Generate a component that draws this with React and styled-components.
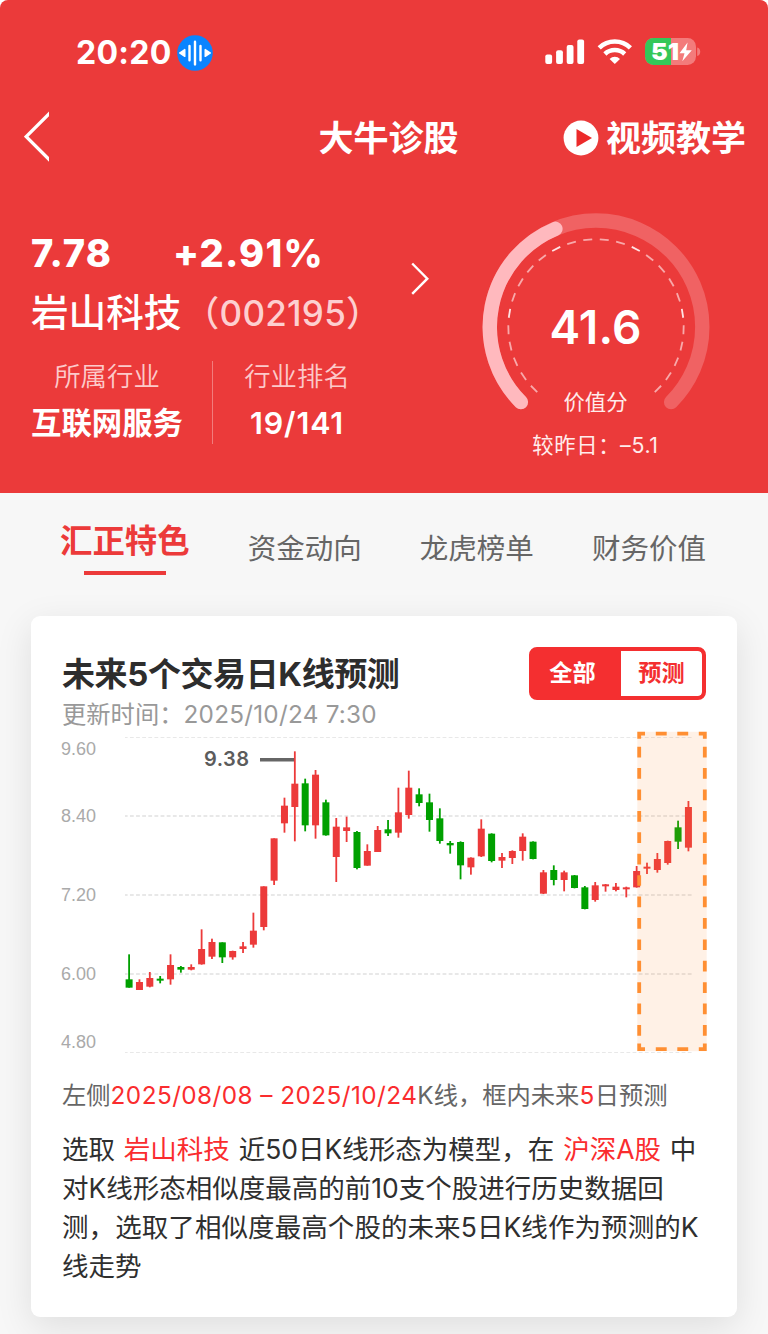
import React from 'react';
import styled, { createGlobalStyle } from 'styled-components';

const GlobalStyle = createGlobalStyle`
    * {
        box-sizing: border-box;
    }

    body {
        margin: 0;
        background: #fff;
        font-family: Inter, 'Noto Sans CJK SC', sans-serif;
        -webkit-font-smoothing: antialiased;
    }
`;

const Page = styled.div`
    width: 768px;
    height: 1334px;
    overflow: hidden;
    border-radius: 8px 8px 0 0;
    background: #f7f7f7;
    white-space: nowrap;
`;

const Header = styled.header`
    height: 493px;
    background: #eb3a3a;
    color: #fff;
`;

const StatusBar = styled.div`
    display: flex;
    align-items: center;
    justify-content: space-between;
    height: 105px;
    padding: 0 67px 0 76px;
`;

const StatusGroup = styled.div`
    display: flex;
    align-items: center;
    gap: ${(p) => p.$gap}px;
    margin-bottom: ${(p) => p.$lift || 0}px;
`;

const Clock = styled.span`
    width: 96px;
    font-size: 32px;
    line-height: 40px;
    font-weight: 700;
    letter-spacing: 0.3px;
`;

const Nav = styled.nav`
    display: grid;
    grid-template-columns: 1fr auto 1fr;
    align-items: center;
    height: 65px;
    padding: 0 22px 0 24px;
`;

const BackArrow = styled.svg`
    margin-bottom: 2px;
`;

const NavTitle = styled.h1`
    margin: 0;
    padding-left: 7px;
    font-size: 35px;
    line-height: 50px;
    font-weight: 700;
`;

const VideoLink = styled.div`
    display: flex;
    align-items: center;
    justify-content: flex-end;
    gap: 6.5px;
    font-size: 35px;
    line-height: 50px;
    font-weight: 700;
`;

const Summary = styled.div`
    display: flex;
    height: 323px;
    padding: 0 0 0 31px;
`;

const Stock = styled.div`
    width: 380px;
    padding-top: 58px;
`;

const PriceRow = styled.div`
    display: flex;
    height: 51px;
    font-size: 38px;
    line-height: 50px;
    font-weight: 850;
`;

const Price = styled.span`
    width: 142px;
    letter-spacing: 1px;
`;

const Change = styled.span`
    letter-spacing: 1.2px;
`;

const NameRow = styled.div`
    display: flex;
    height: 68px;
    font-size: 37.6px;
    line-height: 68px;
    font-weight: 500;
`;

const Code = styled.span`
    margin-left: 3px;
    font-size: 35px;
    letter-spacing: 0.25px;
    color: #fdcfd0;
`;

const Facts = styled.div`
    display: flex;
    align-items: flex-start;
    margin-top: 14px;
    height: 83px;
`;

const Fact = styled.div`
    display: flex;
    flex-direction: column;
    align-items: center;
    width: ${(p) => p.$width}px;
`;

const FactLabel = styled.span`
    font-size: 26.4px;
    line-height: 30px;
    font-weight: 350;
    color: #fccaca;
`;

const FactValue = styled.span`
    margin-top: 7px;
    font-size: 30.4px;
    line-height: 50px;
    font-weight: ${(p) => p.$weight || 700};
    letter-spacing: ${(p) => p.$ls || 0}px;
`;

const FactLine = styled.div`
    width: 1px;
    height: 83px;
    margin: 0 0 0 29px;
    background: #f27c7c;
`;

const MoreArrow = styled.div`
    width: 70px;
    padding-top: 92px;
`;

const Gauge = styled.div`
    display: grid;
    justify-items: center;
    width: 229px;
    padding-top: 43px;
`;

const GaugeRing = styled.svg`
    grid-area: 1 / 1;
    align-self: start;
    display: block;
`;

const GaugeText = styled.div`
    grid-area: 1 / 1;
    display: flex;
    flex-direction: column;
    align-items: center;
    padding-top: 84px;
`;

const Score = styled.span`
    font-size: 46px;
    line-height: 60px;
    font-weight: 600;
    letter-spacing: 0.2px;
`;

const ScoreNote = styled.span`
    margin-top: ${(p) => p.$top}px;
    font-size: 21.3px;
    line-height: 30px;
    font-weight: 400;
    color: #ffecec;
    letter-spacing: ${(p) => p.$ls || 0}px;
`;

const Tabs = styled.div`
    display: flex;
    height: 123px;
    padding: 24px 62px 0 60px;
    justify-content: space-between;
`;

const Tab = styled.div`
    display: flex;
    flex-direction: column;
    align-items: center;
    padding-top: ${(p) => (p.$active ? 0 : 12)}px;
    font-size: ${(p) => (p.$active ? 32.4 : 28.5)}px;
    line-height: ${(p) => (p.$active ? 50 : 40)}px;
    font-weight: ${(p) => (p.$active ? 700 : 400)};
    color: ${(p) => (p.$active ? '#ec3a3a' : '#666')};

    &::after {
        content: '';
        width: 82px;
        height: 4px;
        margin-top: 4px;
        background: ${(p) => (p.$active ? '#ec3a3a' : 'transparent')};
    }
`;

const Card = styled.section`
    width: 706px;
    height: 701px;
    margin-left: 31px;
    padding: 31px 31px 0;
    border-radius: 9px;
    background: #fff;
    box-shadow: 0 10px 36px rgba(0, 0, 0, 0.1);
`;

const CardHead = styled.div`
    display: flex;
    justify-content: space-between;
    height: 83px;
`;

const CardTitle = styled.h2`
    margin: 1px 0 0;
    font-size: 33px;
    line-height: 52px;
    font-weight: 700;
    letter-spacing: -0.4px;
    color: #2d2d2d;
`;

const Updated = styled.div`
    margin-top: -1px;
    font-size: 24.3px;
    line-height: 30px;
    color: #999;
`;

const Toggle = styled.div`
    display: flex;
    width: 177px;
    height: 53px;
    border: 4px solid #f42f30;
    border-radius: 8px;
    overflow: hidden;
    background: #f42f30;
`;

const ToggleItem = styled.div`
    width: ${(p) => (p.$active ? 88 : 81)}px;
    padding-right: ${(p) => (p.$active ? 9 : 0)}px;
    border-radius: ${(p) => (p.$active ? '0' : '0 4px 4px 0')};
    line-height: 44px;
    text-align: center;
    font-size: 23.2px;
    font-weight: 700;
    background: ${(p) => (p.$active ? '#f42f30' : '#fff')};
    color: ${(p) => (p.$active ? '#fff' : '#f42f30')};
`;

const Chart = styled.svg`
    display: block;
    overflow: visible;
`;

const Range = styled.p`
    margin: 20px 0 0;
    font-size: 24.3px;
    line-height: 40px;
    color: #666;
`;

const Desc = styled.div`
    margin-top: 14.5px;
    font-size: 26.5px;
    line-height: 39.3px;
    color: #2f2f2f;
`;

const DescLine = styled.div`
    word-spacing: ${(p) => p.$ws || 0}px;
    letter-spacing: ${(p) => p.$ls || 0}px;
`;

const Spaced = styled.span`
    letter-spacing: ${(p) => p.$ls || 0}px;
`;

const Red = styled(Spaced)`
    color: #fa2c2e;
`;

const RED = '#ec3a3a';
const GREEN = '#00a000';

// [color, high, low, bodyTop, bodyBottom], thirds of a pixel below the chart top
const candles = [
    [GREEN, 673, 773, 748, 773],
    [RED, 748, 780, 756, 780],
    [RED, 726, 772, 744, 770],
    [GREEN, 738, 760, 746, 752],
    [RED, 673, 764, 705, 748],
    [GREEN, 708, 728, 711, 719],
    [RED, 703, 721, 711, 719],
    [RED, 598, 704, 657, 703],
    [RED, 626, 687, 636, 680],
    [GREEN, 637, 699, 637, 682],
    [RED, 662, 689, 663, 682],
    [RED, 636, 669, 649, 657],
    [RED, 548, 653, 602, 644],
    [RED, 469, 601, 469, 591],
    [RED, 325, 465, 325, 452],
    [RED, 203, 308, 227, 280],
    [RED, 64, 334, 161, 231],
    [GREEN, 146, 304, 160, 286],
    [RED, 120, 326, 134, 286],
    [GREEN, 209, 317, 217, 316],
    [RED, 264, 456, 290, 381],
    [RED, 260, 336, 292, 303],
    [GREEN, 303, 418, 306, 414],
    [RED, 343, 407, 363, 407],
    [RED, 288, 366, 300, 366],
    [GREEN, 270, 318, 298, 310],
    [RED, 173, 323, 247, 308],
    [RED, 122, 266, 173, 255],
    [GREEN, 175, 229, 193, 219],
    [GREEN, 191, 305, 217, 270],
    [GREEN, 235, 341, 265, 333],
    [GREEN, 333, 371, 339, 346],
    [GREEN, 334, 448, 336, 406],
    [RED, 382, 434, 383, 412],
    [RED, 268, 381, 296, 379],
    [GREEN, 310, 397, 311, 393],
    [RED, 369, 414, 381, 392],
    [RED, 361, 402, 363, 384],
    [RED, 310, 392, 320, 363],
    [GREEN, 334, 388, 335, 387],
    [RED, 420, 492, 427, 491],
    [GREEN, 406, 466, 420, 450],
    [RED, 422, 484, 427, 450],
    [GREEN, 435, 475, 436, 474],
    [GREEN, 468, 538, 472, 537],
    [RED, 456, 515, 466, 510],
    [RED, 462, 485, 463, 469],
    [RED, 459, 484, 470, 480],
    [RED, 470, 502, 472, 478],
    [RED, 408, 473, 423, 472],
    [RED, 398, 432, 410, 416],
    [RED, 369, 428, 387, 420],
    [RED, 332, 404, 333, 399],
    [GREEN, 272, 357, 292, 335],
    [RED, 213, 364, 231, 353],
];

const gridLines = [
    { y: 7.5, label: '9.60', labelY: 25.3, width: 1 },
    { y: 86, label: '8.40', labelY: 92, width: 1.8 },
    { y: 165, label: '7.20', labelY: 171, width: 1.8 },
    { y: 244, label: '6.00', labelY: 250, width: 1.8 },
    { y: 322.5, label: '4.80', labelY: 318, width: 1 },
];

const KLineChart = () => (
    <Chart width="645" height="325" viewBox="0 0 645 325">
        {gridLines.map((line) => (
            <g key={line.label}>
                <line
                    x1="63"
                    x2="630"
                    y1={line.y}
                    y2={line.y}
                    stroke="#e8e8e8"
                    strokeWidth={line.width}
                    strokeDasharray="3.8 2.33"
                    strokeDashoffset="1.2"
                />
                <text x="-1" y={line.labelY} fontFamily="Liberation Sans" fontSize="18" fill="#aaa">
                    {line.label}
                </text>
            </g>
        ))}
        <line x1="198" x2="233" y1="29.8" y2="29.8" stroke="#666" strokeWidth="3.4" />
        <text x="142" y="35.6" fontSize="20" fontWeight="600" fill="#5c5c5c" textLength="45">
            9.38
        </text>
        {candles.map(([color, high, low, top, bottom], i) => {
            const x = 67.1 + i * 10.358;
            return (
                <g key={i} fill={color}>
                    <rect x={x - 0.9} y={high / 3} width="1.8" height={(low - high) / 3} />
                    <rect x={x - 3.5} y={top / 3} width="7" height={(bottom - top) / 3} />
                </g>
            );
        })}
        <rect x="575.3" y="1.8" width="69.4" height="319.4" fill="#ff8f33" fillOpacity="0.12" />
        <g fill="none" stroke="#ff8f33" strokeWidth="3.8">
            <path d="M577.2 16.7V306M642.8 16.7V306" strokeDasharray="10.7 10.71" />
            <path d="M593.8 3.7h10.9M615.3 3.7h10.9M593.8 319.1h10.9M615.3 319.1h10.9" />
            <path d="M583 3.7h-5.8v5M636.8 3.7h6v5M583 319.1h-5.8v-5.5M636.8 319.1h6v-5.5" />
        </g>
    </Chart>
);

const dashes = Array.from({ length: 26 }, (_, i) => i);

const ScoreGauge = () => (
    <Gauge>
        <GaugeRing width="228" height="228" viewBox="-114 -114 228 228">
            <g fill="none" strokeWidth="14.4" strokeLinecap="round">
                <path d="M-75.1 75.1A106.3 106.3 0 1 1 75.1 75.1" stroke="#f06263" />
                <path d="M-75.1 75.1A106.3 106.3 0 0 1 -40.6 -98.2" stroke="#ffb9be" />
            </g>
            {dashes.map((i) => (
                <line
                    key={i}
                    x1="-4.5"
                    x2="4.5"
                    y1="-87.6"
                    y2="-87.6"
                    stroke={i % 5 === 0 && i > 0 && i < 25 ? '#ffe3e4' : '#f8a9aa'}
                    strokeWidth="1.8"
                    transform={`rotate(${i * 10.8 - 135})`}
                />
            ))}
        </GaugeRing>
        <GaugeText>
            <Score>41.6</Score>
            <ScoreNote $top={30}>价值分</ScoreNote>
            <ScoreNote $top={13} $ls={0.65}>
                较昨日：–5.1
            </ScoreNote>
        </GaugeText>
    </Gauge>
);

const VoiceIcon = () => (
    <svg width="36" height="36" viewBox="0 0 36 36">
        <circle cx="18" cy="18" r="17.8" fill="#0a84ff" />
        <path d="M18 6.8v22.6M12.5 11v14.2M23.5 11v14.2" stroke="#fff" strokeWidth="2.4" strokeLinecap="round" />
        <path d="M2.6 18l5.2-3.4v6.8zM33.4 18l-5.2-3.4v6.8z" fill="#fff" stroke="#fff" strokeWidth="1.4" strokeLinejoin="round" />
    </svg>
);

const SignalIcon = () => (
    <svg width="40" height="26" viewBox="0 0 40 26" fill="#fff">
        <rect x="0.3" y="15.4" width="6.8" height="9.6" rx="2" />
        <rect x="11.1" y="11.2" width="6.8" height="13.8" rx="2" />
        <rect x="21.7" y="6" width="6.8" height="19" rx="2" />
        <rect x="32.3" y="0.5" width="6.8" height="24.5" rx="2" />
    </svg>
);

const WifiIcon = () => (
    <svg width="36" height="26" viewBox="0 0 36 26">
        <path d="M2.2 8.800a22.6 22.6 0 0 1 31.2 0M7.900 15a14.400 14.400 0 0 1 19.800 0" fill="none" stroke="#fff" strokeWidth="4.6" />
        <path d="M12.6 19.9a7.4 7.4 0 0 1 10.4 0L17.8 25z" fill="#fff" />
    </svg>
);

const BatteryIcon = () => (
    <svg width="56" height="28" viewBox="0 0 56 28">
        <defs>
            <clipPath id="battery">
                <rect width="51" height="27" rx="8.4" />
            </clipPath>
        </defs>
        <g clipPath="url(#battery)">
            <rect width="51" height="27" fill="#f37b7b" />
            <rect width="26" height="27" fill="#34c759" />
        </g>
        <path d="M52.2 9.5c2 .5 3 2 3 4.2s-1 3.7-3 4.2z" fill="#f37b7b" />
        <text x="6" y="22" fontSize="23.500" fontWeight="900" fill="#fff" textLength="28" lengthAdjust="spacingAndGlyphs">
            51
        </text>
        <path d="M42.6 4.500L34.500 15.200h5L37.300 23.200l9.500-11h-5.600z" fill="#fff" />
    </svg>
);

const App = () => (
    <>
        <GlobalStyle />
        <Page>
            <Header>
                <StatusBar>
                    <StatusGroup $gap={5}>
                        <Clock>20:20</Clock>
                        <VoiceIcon />
                    </StatusGroup>
                    <StatusGroup $gap={12} $lift={1}>
                        <SignalIcon />
                        <WifiIcon />
                        <BatteryIcon />
                    </StatusGroup>
                </StatusBar>
                <Nav>
                    <BackArrow width="25" height="52" viewBox="0 0 25 52">
                        <path d="M27 0.800L2.200 25.600L27 50.400" fill="none" stroke="#fff" strokeWidth="3.400" />
                    </BackArrow>
                    <NavTitle>大牛诊股</NavTitle>
                    <VideoLink>
                        <svg width="36" height="36" viewBox="0 0 36 36">
                            <circle cx="18" cy="18" r="17.400" fill="#fff" />
                            <path d="M13.500 9v18L29 18z" fill="#ec2a2a" />
                        </svg>
                        视频教学
                    </VideoLink>
                </Nav>
                <Summary>
                    <Stock>
                        <PriceRow>
                            <Price>7.78</Price>
                            <Change>+2.91%</Change>
                        </PriceRow>
                        <NameRow>
                            岩山科技<Code>（002195）</Code>
                        </NameRow>
                        <Facts>
                            <Fact $width={152}>
                                <FactLabel>所属行业</FactLabel>
                                <FactValue>互联网服务</FactValue>
                            </Fact>
                            <FactLine />
                            <Fact $width={168}>
                                <FactLabel>行业排名</FactLabel>
                                <FactValue $weight={600} $ls={0.9}>
                                    19/141
                                </FactValue>
                            </Fact>
                        </Facts>
                    </Stock>
                    <MoreArrow>
                        <svg width="18" height="34" viewBox="0 0 18 34">
                            <path d="M1.200 1.500L16.300 16.700L1.200 31.800" fill="none" stroke="#fff" strokeWidth="2.400" />
                        </svg>
                    </MoreArrow>
                    <ScoreGauge />
                </Summary>
            </Header>
            <Tabs>
                <Tab $active>汇正特色</Tab>
                <Tab>资金动向</Tab>
                <Tab>龙虎榜单</Tab>
                <Tab>财务价值</Tab>
            </Tabs>
            <Card>
                <CardHead>
                    <div>
                        <CardTitle>未来5个交易日K线预测</CardTitle>
                        <Updated>
                            更新时间：<Spaced $ls={0.25}>2025/10/24 7:30</Spaced>
                        </Updated>
                    </div>
                    <Toggle>
                        <ToggleItem $active>全部</ToggleItem>
                        <ToggleItem>预测</ToggleItem>
                    </Toggle>
                </CardHead>
                <KLineChart />
                <Range>
                    左侧<Red $ls={0.45}>2025/08/08 – 2025/10/24</Red>K线，框内未来<Red $ls={0.5}>5</Red>日预测
                </Range>
                <Desc>
                    <DescLine $ws={1.4}>
                        选取 <Red>岩山科技</Red> 近50日K线形态为模型，在 <Red>沪深A股</Red> 中
                    </DescLine>
                    <DescLine>对K线形态相似度最高的前10支个股进行历史数据回</DescLine>
                    <DescLine $ls={0.08}>测，选取了相似度最高个股的未来5日K线作为预测的K</DescLine>
                    <DescLine>线走势</DescLine>
                </Desc>
            </Card>
        </Page>
    </>
);

export default App;
